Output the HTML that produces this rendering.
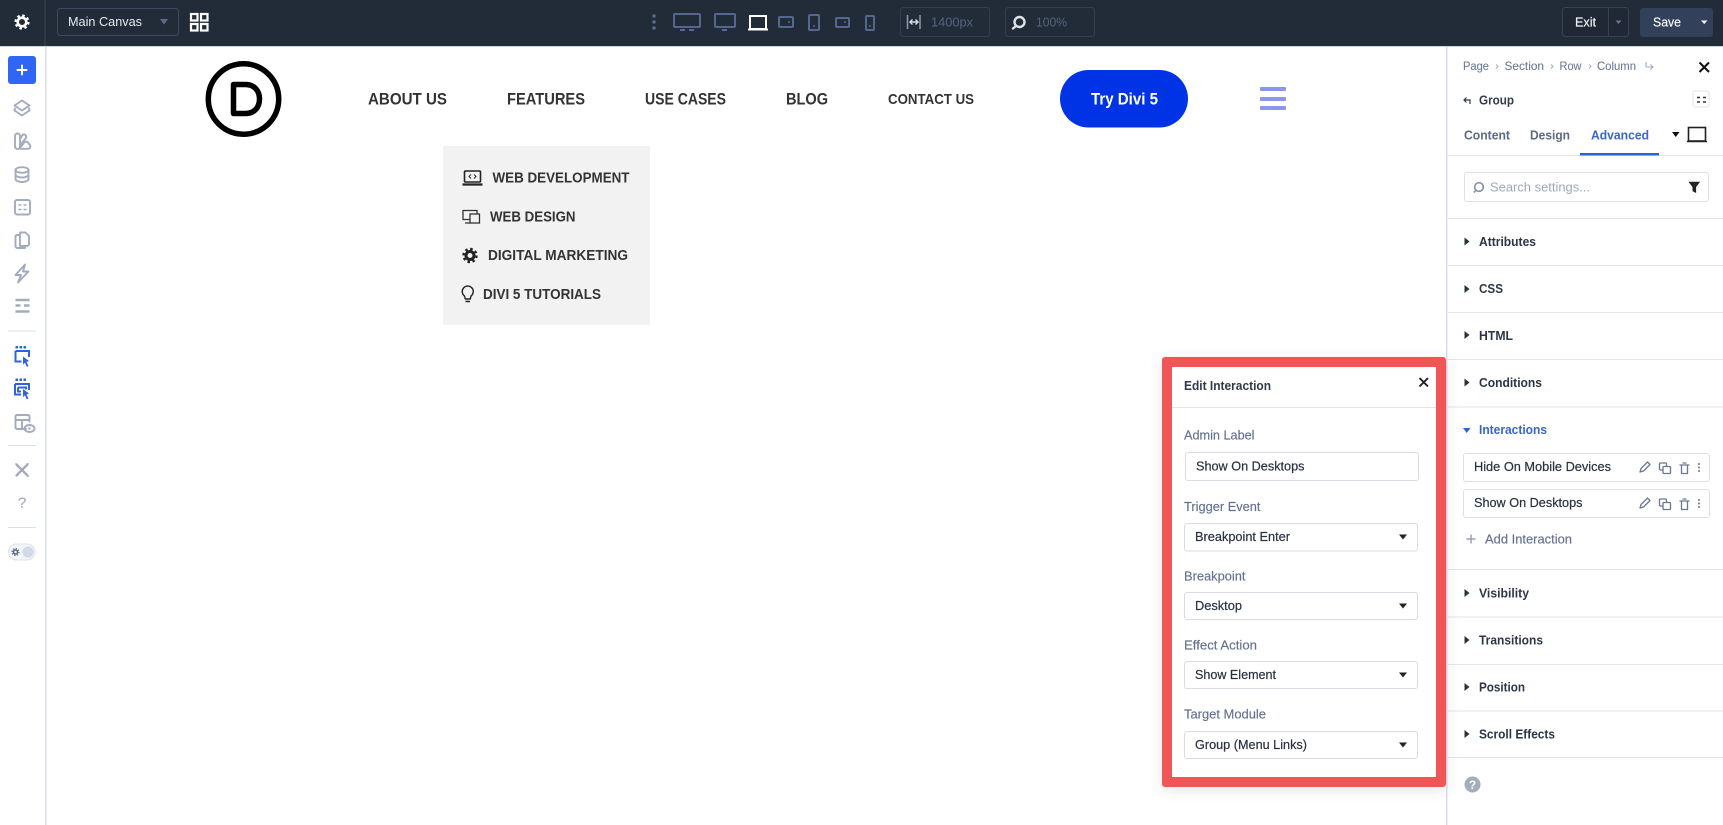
<!DOCTYPE html>
<html><head><meta charset="utf-8"><title>Divi Builder</title>
<style>
html,body{margin:0;padding:0;background:#fff;width:1723px;height:825px;overflow:hidden}
svg{display:block}
text{font-family:"Liberation Sans",sans-serif}
.l{fill:#64718f;font-size:13px;stroke:#64718f;stroke-width:.15}
.v{fill:#2a3240;font-size:12.5px;stroke:#2a3240;stroke-width:.2}
.s{fill:#2d3646;font-size:12.5px;font-weight:700}
.n{fill:#333;font-size:17px;font-weight:700}
.m{fill:#333;font-size:14.5px;font-weight:700}
.c{fill:#6d7a96;font-size:12px;stroke:#6d7a96;stroke-width:.1}
.t{fill:#5d6a85;font-size:13px;font-weight:700}
.ic{fill:none;stroke:#a3abbf;stroke-width:1.9;stroke-linejoin:round;stroke-linecap:round}
.bl{fill:none;stroke:#2f62e0;stroke-width:2}
.dv{fill:none;stroke:#56678f;stroke-width:2}
.ra{fill:none;stroke:#6b7690;stroke-width:1.3;stroke-linejoin:round;stroke-linecap:round}
</style></head><body>
<svg width="1723" height="825" viewBox="0 0 1723 825" xmlns="http://www.w3.org/2000/svg">
<defs><filter id="sh" x="-10%" y="-10%" width="120%" height="120%"><feDropShadow dx="0" dy="3" stdDeviation="6" flood-color="#556" flood-opacity=".16"/></filter></defs>
<rect width="1723" height="825" fill="#fff"/>

<!-- top bar -->
<rect width="1723" height="46" fill="#222c39"/>
<rect y="46" width="1723" height="1" fill="#cfd6de"/>
<rect x="44.5" width="1" height="46" fill="#3a4555"/>
<g transform="translate(22,22)" fill="none" stroke="#fff"><circle r="4.3" stroke-width="2.6"/><circle r="6.4" stroke-width="2.4" stroke-dasharray="2.5 2.53"/></g>
<rect x="57.5" y="8.5" width="121" height="27" rx="3" fill="#222c39" stroke="#3d4a5e"/>
<text x="68" y="26" textLength="74" lengthAdjust="spacingAndGlyphs" font-size="13" fill="#e6eaef">Main Canvas</text>
<path d="M160 19h8l-4 5.5z" fill="#5a6b90"/>
<g fill="none" stroke="#fff" stroke-width="2.2"><rect x="191" y="14" width="6.5" height="6.5"/><rect x="201" y="14" width="6.5" height="6.5"/><rect x="191" y="24" width="6.5" height="6.5"/><rect x="201" y="24" width="6.5" height="6.5"/></g>

<g fill="#5b6b8f"><circle cx="654" cy="16" r="1.7"/><circle cx="654" cy="22" r="1.7"/><circle cx="654" cy="28" r="1.7"/></g>
<rect x="674" y="14" width="26" height="13" rx="1" class="dv"/><path d="M680 30h5M689 30h5" class="dv"/>
<rect x="715" y="14" width="20" height="13" rx="1" class="dv"/><path d="M722 30h5" class="dv"/>
<rect x="750" y="16" width="16" height="13" fill="none" stroke="#fff" stroke-width="2"/><path d="M748 29.500h20" stroke="#fff" stroke-width="2"/>
<rect x="779" y="17" width="14" height="10" rx="1" class="dv"/><circle cx="789" cy="22" r="1" fill="#56678f"/>
<rect x="809" y="15" width="10" height="15" rx="1" class="dv"/><circle cx="814" cy="26" r="1" fill="#56678f"/>
<rect x="836" y="18" width="13" height="9" rx="1" class="dv"/><circle cx="845" cy="22" r="1" fill="#56678f"/>
<rect x="866" y="16" width="8" height="14" rx="1" class="dv"/><circle cx="870" cy="26" r="1" fill="#56678f"/>

<rect x="900.500" y="7.500" width="89" height="29" rx="3" fill="none" stroke="#333f50"/>
<path d="M907.500 15v14M920 15v14" stroke="#8d99ad" stroke-width="1.500"/><path d="M910 22h8M912.500 19.500l-2.500 2.500 2.500 2.500M915.500 19.500l2.500 2.500-2.500 2.500" stroke="#d8dde5" stroke-width="1.400" fill="none"/>
<text x="931" y="26.500" textLength="42" lengthAdjust="spacingAndGlyphs" font-size="13" fill="#55637e">1400px</text>
<rect x="1005.500" y="7.500" width="89" height="29" rx="3" fill="none" stroke="#333f50"/>
<circle cx="1019.500" cy="22" r="5" fill="none" stroke="#dfe3e9" stroke-width="2.400"/><path d="M1016 26l-3 2.500" stroke="#dfe3e9" stroke-width="2.400" stroke-linecap="round"/>
<text x="1036" y="26.500" textLength="31" lengthAdjust="spacingAndGlyphs" font-size="13" fill="#55637e">100%</text>

<rect x="1562.500" y="7.500" width="66" height="29" rx="3" fill="#1f2834" stroke="#364253"/>
<path d="M1608.500 8v28" stroke="#364253"/>
<text x="1575" y="26.500" textLength="21" lengthAdjust="spacingAndGlyphs" font-size="13" fill="#f1f3f6" stroke="#f1f3f6" stroke-width=".2">Exit</text>
<path d="M1615.500 20.500h6l-3 3.500z" fill="#6b7688"/>
<rect x="1640" y="8" width="73" height="29" rx="3" fill="#324159"/>
<text x="1653" y="26.500" textLength="28" lengthAdjust="spacingAndGlyphs" font-size="13" fill="#f4f6f8" stroke="#f4f6f8" stroke-width=".2">Save</text>
<path d="M1701 20.500h6.500l-3.250 3.500z" fill="#fff"/>

<!-- left sidebar -->
<rect x="45" y="47" width="1.500" height="778" fill="#d9dfe6"/>
<rect x="8" y="56" width="28" height="28" rx="3" fill="#2f66f5"/>
<path d="M22 65.500v9M17.500 70h9" stroke="#fff" stroke-width="2" stroke-linecap="round"/>
<g class="ic">
<path d="M22 100.500l7.500 5-7.500 5-7.500-5zM15 108.500l-.5 2 7.500 5 7.500-5-.5-2"/>
<path d="M15 136a2.500 2.500 0 0 1 5 0v10.500a2.500 2.500 0 0 1-5 0zM20 139l2.500-4a2.300 2.300 0 0 1 3.500.8l.3 1.700-6.300 8M20.500 148.800h7.500a2.400 2.400 0 0 0 1.900-3.800l-1.900-2.500a2.400 2.400 0 0 0-3.800 0l-4 5"/>
<ellipse cx="22" cy="170" rx="6.500" ry="2.800"/><path d="M15.500 170v9c0 1.700 3 3 6.500 3s6.500-1.300 6.500-3v-9M15.500 174.500c0 1.700 3 3 6.500 3s6.500-1.300 6.500-3"/>
<rect x="15" y="200" width="15" height="14.500" rx="2"/><path d="M19 205h2M24 205h2M19 209.500h2M24 209.500h2" stroke-width="1.400"/>
<path d="M20 232.500h5.500l3.500 3.500v8a2 2 0 0 1-2 2h-7zM20 235h-3a1.500 1.500 0 0 0-1.500 1.500v9.500a2 2 0 0 0 2 2h7.500v-1.500"/>
<path d="M25 264.500l-9.500 10.500h5.500l-3 7.500 10.500-11h-5.500z"/>
<path d="M15.500 300h14M15.500 305.500h5M24 305.500h5.500M15.500 311.500h14" stroke-width="2.400" stroke-linecap="butt"/>
</g>
<rect x="8" y="330.500" width="28" height="1" fill="#d9dee5"/>
<g fill="#2f62e0"><rect x="15.500" y="346" width="2.500" height="2.500"/><rect x="19.500" y="346" width="2.500" height="2.500"/><rect x="23.500" y="346" width="2.500" height="2.500"/><rect x="15.500" y="378.500" width="2.500" height="2.500"/><rect x="19.500" y="378.500" width="2.500" height="2.500"/><rect x="23.500" y="378.500" width="2.500" height="2.500"/></g>
<path d="M15.500 351h13.500v6M15.500 351v10.500h6" class="bl"/>
<path d="M23 356.500l6 4.500-2.500 1 2 4-1.800.8-1.700-4-2 1.700z" fill="#2f62e0"/>
<path d="M15 384h14v6M15 384v10.500h6M18 387.500h8v2M18 387.500v4h3" class="bl"/>
<path d="M23 389l6 4.500-2.500 1 2 4-1.800.8-1.700-4-2 1.700z" fill="#2f62e0"/>
<g class="ic" stroke-width="1.600"><path d="M26 429h-9a1.500 1.500 0 0 1-1.500-1.500v-11a1.500 1.500 0 0 1 1.500-1.500h11a1.500 1.500 0 0 1 1.500 1.500v5M15.500 420h14M22 420v9"/><ellipse cx="29.500" cy="428.500" rx="5" ry="3.500"/></g>
<circle cx="29.500" cy="428.500" r="1.200" fill="#a3abbf"/>
<rect x="8" y="445" width="28" height="1" fill="#d9dee5"/>
<path d="M16.500 464.500l11 11M27.500 464.500l-11 11" stroke="#a3abbf" stroke-width="2.300" stroke-linecap="round" fill="none"/><path d="M15 463l3 1-1 3zM29 463l-3 .5 .5 3zM29.500 477l-2.500-.5-.5-2.500z" fill="#a3abbf"/>
<text x="22" y="507.500" text-anchor="middle" font-size="15" fill="#a9b0c2" stroke="#a9b0c2" stroke-width=".3">?</text>
<rect x="8" y="527" width="28" height="1" fill="#d9dee5"/>
<rect x="8.500" y="544" width="26.500" height="16" rx="8" fill="#f2f4f8" stroke="#dee2ea"/>
<g transform="translate(15.500,552)" fill="none" stroke="#5d6880"><circle r="2" stroke-width="1.500"/><circle r="3.400" stroke-width="1.300" stroke-dasharray="1.300 1.370"/></g>
<circle cx="28" cy="552" r="5.500" fill="#d2d8e8"/>

<!-- canvas header -->
<circle cx="243.500" cy="99" r="35.200" fill="none" stroke="#000" stroke-width="5.500"/>
<path d="M233.500 84.500h12c8.500 0 14 6 14 14.500s-5.500 14.500-14 14.500h-12z" fill="none" stroke="#000" stroke-width="5.500" stroke-linejoin="round"/>
<text x="368" y="104.500" class="n" textLength="79" lengthAdjust="spacingAndGlyphs">ABOUT US</text>
<text x="507" y="104.500" class="n" textLength="78" lengthAdjust="spacingAndGlyphs">FEATURES</text>
<text x="645" y="104.500" class="n" textLength="81" lengthAdjust="spacingAndGlyphs">USE CASES</text>
<text x="786" y="104.500" class="n" textLength="42" lengthAdjust="spacingAndGlyphs">BLOG</text>
<text x="888" y="104" class="n" style="font-size:15px" textLength="86" lengthAdjust="spacingAndGlyphs">CONTACT US</text>
<rect x="1060" y="70" width="128" height="57.500" rx="28.700" fill="#0033e6"/>
<text x="1091" y="104.500" textLength="67" lengthAdjust="spacingAndGlyphs" font-size="17" font-weight="700" fill="#fff">Try Divi 5</text>
<g fill="#8b98ea"><rect x="1260" y="87" width="26" height="4" rx="1"/><rect x="1260" y="97" width="26" height="4" rx="1"/><rect x="1260" y="106" width="26" height="4" rx="1"/></g>

<!-- dropdown -->
<rect x="443" y="146" width="207" height="179" fill="#f2f2f2"/>
<rect x="464.500" y="171" width="16" height="11" rx="1" fill="none" stroke="#222" stroke-width="1.600"/><path d="M462.500 184.500h20" stroke="#222" stroke-width="2.200"/><path d="M471 174.500l-2 2 2 2M474 174.500l2 2-2 2" fill="none" stroke="#222" stroke-width="1"/>
<text x="492.500" y="182.500" class="m" textLength="137" lengthAdjust="spacingAndGlyphs">WEB DEVELOPMENT</text>
<path d="M474 219.500h-11v-9h14v3M465 223h5" fill="none" stroke="#333" stroke-width="1.300"/><rect x="470" y="214" width="9.500" height="9" fill="#f2f2f2" stroke="#333" stroke-width="1.300"/>
<text x="490" y="221.500" class="m" textLength="85.500" lengthAdjust="spacingAndGlyphs">WEB DESIGN</text>
<g transform="translate(470,255.500)" fill="none" stroke="#222"><circle r="4" stroke-width="3"/><circle r="6.500" stroke-width="2.400" stroke-dasharray="2.500 2.600"/></g>
<text x="488" y="260" class="m" textLength="140" lengthAdjust="spacingAndGlyphs">DIGITAL MARKETING</text>
<path d="M464.500 296a5.500 5.500 0 1 1 6.500 0l-.7 3h-5z" fill="none" stroke="#222" stroke-width="1.400" stroke-linejoin="round"/><path d="M465.500 301.500h4.500" stroke="#222" stroke-width="1.500"/>
<text x="483" y="299" class="m" textLength="118" lengthAdjust="spacingAndGlyphs">DIVI 5 TUTORIALS</text>

<!-- right panel -->
<rect x="1446" y="47" width="1.500" height="778" fill="#d9dfe6"/>
<text x="1463" y="70" class="c" textLength="26" lengthAdjust="spacingAndGlyphs">Page</text>
<path d="M1496 64.500l2 2-2 2" fill="none" stroke="#a3adbf" stroke-width="1"/>
<text x="1504.500" y="70" class="c" textLength="39.500" lengthAdjust="spacingAndGlyphs">Section</text>
<path d="M1551 64.500l2 2-2 2" fill="none" stroke="#a3adbf" stroke-width="1"/>
<text x="1559.500" y="70" class="c" textLength="22" lengthAdjust="spacingAndGlyphs">Row</text>
<path d="M1589 64.500l2 2-2 2" fill="none" stroke="#a3adbf" stroke-width="1"/>
<text x="1597" y="70" class="c" textLength="39" lengthAdjust="spacingAndGlyphs">Column</text>
<path d="M1646 62v5h7M1650.500 64.500l2.500 2.500-2.500 2.500" fill="none" stroke="#a3adbf" stroke-width="1.100"/>
<path d="M1699.500 62.500l9.500 9.500M1709 62.500l-9.500 9.500" stroke="#111" stroke-width="2"/>
<path d="M1470 104v-4h-5M1466.500 97.500l-2.500 2.500 2.500 2.500" fill="none" stroke="#2d3646" stroke-width="1.200"/>
<text x="1479" y="104.500" textLength="35" lengthAdjust="spacingAndGlyphs" font-size="13" font-weight="700" fill="#343c4c">Group</text>
<rect x="1693" y="91" width="16" height="16" rx="2" fill="#fff" stroke="#e2e5ea"/>
<path d="M1697 97.500h3M1703 97.500h3M1697 102h3M1703 102h3" stroke="#333" stroke-width="1.500" fill="none"/>
<text x="1464" y="139.500" class="t" textLength="46" lengthAdjust="spacingAndGlyphs">Content</text>
<text x="1530" y="139.500" class="t" textLength="40" lengthAdjust="spacingAndGlyphs">Design</text>
<text x="1591" y="139.500" class="t" style="fill:#3b66c8" textLength="58" lengthAdjust="spacingAndGlyphs">Advanced</text>
<path d="M1447 155.500h276" stroke="#e1e4e9"/>
<rect x="1580" y="153" width="79" height="2.500" fill="#2f62d8"/>
<path d="M1672 132h7.500l-3.750 5z" fill="#111"/>
<rect x="1688.500" y="127.500" width="17" height="13.500" fill="none" stroke="#222" stroke-width="1.600"/><path d="M1687 141.500h20" stroke="#222" stroke-width="1.600"/>
<rect x="1464.500" y="172.500" width="244" height="29" rx="2.500" fill="#fff" stroke="#dde1e7"/>
<circle cx="1479" cy="187" r="4.300" fill="none" stroke="#8a94a8" stroke-width="1.700"/><path d="M1475.800 190.500l-2 2" stroke="#8a94a8" stroke-width="1.700"/>
<text x="1490" y="191.500" textLength="100" lengthAdjust="spacingAndGlyphs" font-size="13" fill="#a0a8b8">Search settings...</text>
<path d="M1689 182h10.500l-3.700 5v5.500l-3-1.500v-4z" fill="#222" stroke="#222" stroke-width=".6"/>
<g fill="#e3e6eb">
<rect x="1447" y="218" width="276" height="1"/><rect x="1447" y="265" width="276" height="1"/><rect x="1447" y="312" width="276" height="1"/><rect x="1447" y="359" width="276" height="1"/><rect x="1447" y="406.500" width="276" height="1"/><rect x="1447" y="569" width="276" height="1"/><rect x="1447" y="616.500" width="276" height="1"/><rect x="1447" y="664" width="276" height="1"/><rect x="1447" y="710.500" width="276" height="1"/><rect x="1447" y="757" width="276" height="1"/>
</g>
<g fill="#2a3240">
<path d="M1464.500 237.500l5 4-5 4z"/><path d="M1464.500 285l5 4-5 4z"/><path d="M1464.500 331l5 4-5 4z"/><path d="M1464.500 378.500l5 4-5 4z"/><path d="M1464.500 589l5 4-5 4z"/><path d="M1464.500 636l5 4-5 4z"/><path d="M1464.500 683l5 4-5 4z"/><path d="M1464.500 730l5 4-5 4z"/>
</g>
<path d="M1463 428h7.500l-3.750 5z" fill="#2f62d8"/>
<text x="1479" y="246" class="s" textLength="57" lengthAdjust="spacingAndGlyphs">Attributes</text>
<text x="1479" y="293" class="s" textLength="24" lengthAdjust="spacingAndGlyphs">CSS</text>
<text x="1479" y="340" class="s" textLength="34" lengthAdjust="spacingAndGlyphs">HTML</text>
<text x="1479" y="387" class="s" textLength="63" lengthAdjust="spacingAndGlyphs">Conditions</text>
<text x="1479" y="434" class="s" style="fill:#3b66c8" textLength="68" lengthAdjust="spacingAndGlyphs">Interactions</text>
<text x="1479" y="597.500" class="s" textLength="50" lengthAdjust="spacingAndGlyphs">Visibility</text>
<text x="1479" y="644.500" class="s" textLength="64" lengthAdjust="spacingAndGlyphs">Transitions</text>
<text x="1479" y="691.500" class="s" textLength="46" lengthAdjust="spacingAndGlyphs">Position</text>
<text x="1479" y="738.500" class="s" textLength="76" lengthAdjust="spacingAndGlyphs">Scroll Effects</text>

<rect x="1463.500" y="453.500" width="246" height="28" rx="2.500" fill="#fff" stroke="#dde1e7"/>
<rect x="1463.500" y="489.500" width="246" height="28" rx="2.500" fill="#fff" stroke="#dde1e7"/>
<text x="1474" y="471" class="v" textLength="137" lengthAdjust="spacingAndGlyphs">Hide On Mobile Devices</text>
<text x="1474" y="507" class="v" textLength="108.500" lengthAdjust="spacingAndGlyphs">Show On Desktops</text>
<g><path d="M1640 472l1-3.500 6.500-6.500 2.500 2.500-6.500 6.500z" class="ra"/><rect x="1659.500" y="463" width="7" height="7" rx="1" class="ra"/><rect x="1663" y="466.500" width="7.500" height="7" rx="1" class="ra" style="fill:#fff"/><path d="M1680 465h9M1681.500 465v8.500h6V465M1683 463h3" class="ra"/><g fill="#6b7690"><circle cx="1699" cy="464" r="1"/><circle cx="1699" cy="467.500" r="1"/><circle cx="1699" cy="471" r="1"/></g></g>
<g transform="translate(0,36)"><path d="M1640 472l1-3.500 6.500-6.500 2.500 2.500-6.500 6.500z" class="ra"/><rect x="1659.500" y="463" width="7" height="7" rx="1" class="ra"/><rect x="1663" y="466.500" width="7.500" height="7" rx="1" class="ra" style="fill:#fff"/><path d="M1680 465h9M1681.500 465v8.500h6V465M1683 463h3" class="ra"/><g fill="#6b7690"><circle cx="1699" cy="464" r="1"/><circle cx="1699" cy="467.500" r="1"/><circle cx="1699" cy="471" r="1"/></g></g>
<path d="M1471 534.500v9M1466.500 539h9" stroke="#98a2b6" stroke-width="1.500"/>
<text x="1485" y="543.500" class="l" style="font-size:12.5px" textLength="87" lengthAdjust="spacingAndGlyphs">Add Interaction</text>
<circle cx="1472.500" cy="784.500" r="8" fill="#a3adbd"/>
<text x="1472.500" y="789" text-anchor="middle" font-size="12" font-weight="700" fill="#fff">?</text>

<!-- modal -->
<rect x="1162" y="357" width="284" height="430" rx="3" fill="#f05656" filter="url(#sh)"/>
<rect x="1172" y="367" width="264" height="410" fill="#fff"/>
<text x="1184" y="390" textLength="87" lengthAdjust="spacingAndGlyphs" font-size="12.500" font-weight="700" fill="#323a48">Edit Interaction</text>
<path d="M1419.500 378l8.500 8.500M1428 378l-8.500 8.500" stroke="#222" stroke-width="1.900"/>
<rect x="1172" y="407" width="264" height="1" fill="#e0e3e9"/>

<text x="1184" y="439.500" class="l" textLength="70.500" lengthAdjust="spacingAndGlyphs">Admin Label</text>
<rect x="1185.500" y="452.500" width="233" height="28" rx="2.500" fill="#fff" stroke="#d9dde3"/>
<text x="1196" y="470.500" class="v" textLength="108.500" lengthAdjust="spacingAndGlyphs">Show On Desktops</text>

<text x="1184" y="511" class="l" textLength="76.500" lengthAdjust="spacingAndGlyphs">Trigger Event</text>
<rect x="1184.500" y="523.500" width="233" height="27.500" rx="2.500" fill="#fff" stroke="#d9dde3"/>
<text x="1195" y="541" class="v" textLength="95" lengthAdjust="spacingAndGlyphs">Breakpoint Enter</text>
<path d="M1399 534.500h8l-4 5z" fill="#222"/>

<text x="1184" y="580.500" class="l" textLength="61.500" lengthAdjust="spacingAndGlyphs">Breakpoint</text>
<rect x="1184.500" y="592.500" width="233" height="27" rx="2.500" fill="#fff" stroke="#d9dde3"/>
<text x="1195" y="610" class="v" textLength="47" lengthAdjust="spacingAndGlyphs">Desktop</text>
<path d="M1399 603.500h8l-4 5z" fill="#222"/>

<text x="1184" y="649.500" class="l" textLength="73" lengthAdjust="spacingAndGlyphs">Effect Action</text>
<rect x="1184.500" y="661.500" width="233" height="27" rx="2.500" fill="#fff" stroke="#d9dde3"/>
<text x="1195" y="679" class="v" textLength="81" lengthAdjust="spacingAndGlyphs">Show Element</text>
<path d="M1399 672.500h8l-4 5z" fill="#222"/>

<text x="1184" y="718.500" class="l" textLength="82" lengthAdjust="spacingAndGlyphs">Target Module</text>
<rect x="1184.500" y="731.500" width="233" height="27" rx="2.500" fill="#fff" stroke="#d9dde3"/>
<text x="1195" y="749" class="v" textLength="112" lengthAdjust="spacingAndGlyphs">Group (Menu Links)</text>
<path d="M1399 742.500h8l-4 5z" fill="#222"/>
</svg>
</body></html>
